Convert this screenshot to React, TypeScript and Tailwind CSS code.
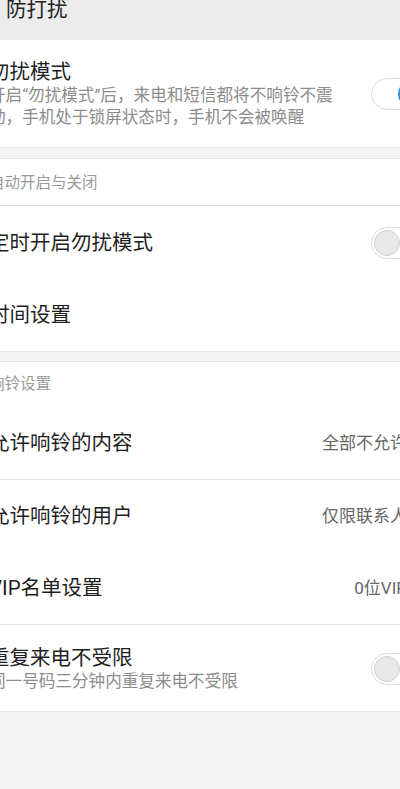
import React from "react";

const font = { fontFamily: '"Roboto", "Noto Sans CJK SC", sans-serif' };

function Toggle({ on }: { on: boolean }) {
  return (
    <div className="relative h-[32px] w-[56px] shrink-0 rounded-full border border-[#dcdcdc] bg-white">
      {on ? (
        <div className="absolute right-[2px] top-[2px] h-[26px] w-[26px] rounded-full bg-[#2b8ef0]" />
      ) : (
        <div className="absolute left-[2px] top-[2px] h-[26px] w-[26px] rounded-full border border-[#d2d2d2] bg-[#e9e9e9]" />
      )}
    </div>
  );
}

function Row({
  title,
  value,
  toggle,
  h,
  border,
}: {
  title: string;
  value?: string;
  toggle?: boolean;
  h: string;
  border?: boolean;
}) {
  return (
    <div
      className={
        "flex items-center justify-between " +
        h +
        (border ? " border-b border-[#dedede]" : "")
      }
    >
      <span className="whitespace-nowrap text-[20.5px] leading-[26px] text-[#1f1f1f]">{title}</span>
      {value !== undefined && (
        <span className="mr-[12px] whitespace-nowrap text-[17px] leading-[24px] text-[#666666]">{value}</span>
      )}
      {toggle !== undefined && (
        <div className="mr-[-8px]">
          <Toggle on={toggle} />
        </div>
      )}
    </div>
  );
}

export default function App() {
  return (
    <div className="h-[789px] w-[400px] overflow-hidden bg-[#f4f4f4]" style={font}>
      <div className="ml-[-11px] w-[430px]">
        {/* header */}
        <div className="-ml-[30px] h-[40px] bg-[#ececec] pl-[47px]">
          <span className="block text-[20.5px] leading-[20px] text-[#222222]">防打扰</span>
        </div>

        {/* section 1 */}
        <div className="flex items-center justify-between border-b border-[#e6e6e6] bg-white pb-[18px] pt-[19px]">
          <div>
            <div className="whitespace-nowrap text-[20.5px] leading-[26px] text-[#1f1f1f]">勿扰模式</div>
            <div className="whitespace-nowrap text-[16.6px] leading-[22px] text-[#8c8c8c]">
              开启“勿扰模式”后，来电和短信都将不响铃不震
            </div>
            <div className="whitespace-nowrap text-[16.6px] leading-[22px] text-[#8c8c8c]">
              动，手机处于锁屏状态时，手机不会被唤醒
            </div>
          </div>
          <div className="mr-[-8px]">
            <Toggle on={true} />
          </div>
        </div>

        <div className="h-[10px]" />

        {/* section 2 */}
        <div className="border-y border-[#e6e6e6] bg-white">
          <div className="flex h-[47px] items-center border-b border-[#dedede] pt-[2px]">
            <span className="whitespace-nowrap text-[15.5px] leading-[20px] text-[#999999]">自动开启与关闭</span>
          </div>
          <Row title="定时开启勿扰模式" toggle={false} h="h-[73px]" />
          <Row title="时间设置" h="h-[72px]" />
        </div>

        <div className="h-[9px]" />

        {/* section 3 */}
        <div className="border-y border-[#e6e6e6] bg-white">
          <div className="flex h-[44px] items-center">
            <span className="whitespace-nowrap text-[15.5px] leading-[20px] text-[#999999]">响铃设置</span>
          </div>
          <Row title="允许响铃的内容" value="全部不允许" h="h-[74px]" border />
          <Row title="允许响铃的用户" value="仅限联系人" h="h-[72px]" />
          <Row title="VIP名单设置" value="0位VIP" h="h-[73px]" border />
          <div className="flex items-center justify-between pb-[18px] pt-[20px]">
            <div>
              <div className="whitespace-nowrap text-[20.5px] leading-[26px] text-[#1f1f1f]">重复来电不受限</div>
              <div className="whitespace-nowrap text-[16.6px] leading-[22px] text-[#8c8c8c]">
                同一号码三分钟内重复来电不受限
              </div>
            </div>
            <div className="mr-[-8px]">
              <Toggle on={false} />
            </div>
          </div>
        </div>
      </div>
    </div>
  );
}
